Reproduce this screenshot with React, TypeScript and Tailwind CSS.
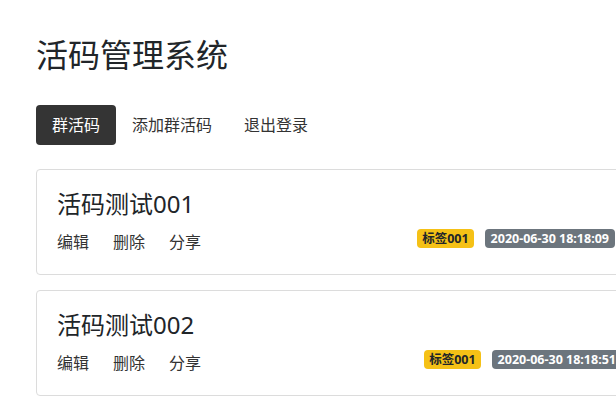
import React from 'react';

const items = [
  { name: '活码测试001', tag: '标签001', time: '2020-06-30 18:18:09', shift: 'mr-0' },
  { name: '活码测试002', tag: '标签001', time: '2020-06-30 18:18:51', shift: '-mr-[7px]' },
];

export default function App() {
  return (
    <div
      className="w-[616px] h-[411px] overflow-hidden bg-white text-[#212529]"
      style={{ fontFamily: '"Noto Sans", "Noto Sans CJK SC", sans-serif' }}
    >
      <div className="w-[680px] pl-9 pt-[33px]">
        <h1 className="text-[32px] leading-[44px] font-normal">活码管理系统</h1>

        <nav className="flex items-center mt-[28px] text-[16px]">
          <a className="h-10 px-4 flex items-center rounded bg-[#343434] text-white">群活码</a>
          <a className="h-10 px-4 flex items-center text-[#333]">添加群活码</a>
          <a className="h-10 px-4 flex items-center text-[#333]">退出登录</a>
        </nav>

        <div className="mt-6 w-[600px] flex flex-col gap-[15px]">
          {items.map((it) => (
            <div key={it.name} className="h-[106px] border border-[#dcdcdc] rounded px-5 pt-[18px]">
              <div className="text-[24px] leading-[32px]">{it.name}</div>
              <div className="flex items-center mt-[10px] h-6">
                <div className="flex gap-6 text-[16px] text-[#333]">
                  <span>编辑</span>
                  <span>删除</span>
                  <span>分享</span>
                </div>
                <div className={`ml-auto mb-[7px] flex items-center gap-[11px] text-[12.5px] font-bold leading-[13px] ${it.shift}`}>
                  <span className="bg-[#f5c116] text-[#212529] rounded px-[5px] py-[3px]">{it.tag}</span>
                  <span className="bg-[#6c757d] text-white rounded px-[6px] py-[3px]">{it.time}</span>
                </div>
              </div>
            </div>
          ))}
        </div>
      </div>
    </div>
  );
}
